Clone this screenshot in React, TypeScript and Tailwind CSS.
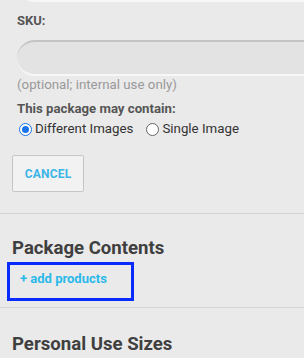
import React from "react";

export default function App() {
  return (
    <div className="w-[304px] h-[358px] overflow-hidden bg-[#eaeaea] font-['Roboto',sans-serif] text-[#555]">
      <div className="pl-[17px]">
        <div className="-mt-[34px] h-[36px] rounded-l-[18px] bg-[#e3e3e3] border-b-2 border-[#f7f7f7]" />
        <div className="mt-[11px] text-[13px] font-bold leading-[15px]">SKU:</div>
        <div className="mt-[12px] h-[36px] rounded-l-[18px] bg-[#e3e3e3] border-t-2 border-[#c4c4c4] border-b-2 border-b-[#f7f7f7]" />
        <div className="mt-[1px] text-[13.3px] leading-[16px] text-[#999]">(optional; internal use only)</div>
        <div className="mt-[8px] text-[13.2px] font-bold leading-[15px]">This package may contain:</div>
        <div className="mt-[5px] flex items-center text-[13.3px] leading-[16px] text-[#333]">
          <span className="w-[13px] h-[13px] rounded-full border-[1.5px] border-[#1a73e8] bg-white flex items-center justify-center ml-[2px]">
            <span className="w-[7px] h-[7px] rounded-full bg-[#1a73e8]" />
          </span>
          <span className="ml-[3px]">Different Images</span>
          <span className="ml-[13px] w-[13px] h-[13px] rounded-full border border-[#666] bg-white" />
          <span className="ml-[3px]">Single Image</span>
        </div>
      </div>
      <div className="pl-[12px] mt-[18px]">
        <button className="w-[72px] h-[37px] bg-[#f2f2f2] border border-[#c6c6c6] rounded-[2px] text-[12px] font-bold text-[#3db5e6] tracking-[0.2px]">
          CANCEL
        </button>
      </div>
      <div className="mt-[21px] border-t border-[#d6d6d6]" />
      <div className="pl-[12px] pt-[23px] text-[18.6px] font-bold leading-[22px] text-[#3f3f3f]">Package Contents</div>
      <div className="ml-[7px] mt-[3px] w-[127px] h-[39px] border-[3px] border-[#0a2bff] flex items-center pl-[10px]">
        <span className="text-[13px] font-bold text-[#2bb9ea] -mt-[6px]">+ add products</span>
      </div>
      <div className="mt-[6px] border-t border-[#d6d6d6]" />
      <div className="pl-[12px] pt-[25px] text-[18.6px] font-bold leading-[22px] text-[#3f3f3f]">Personal Use Sizes</div>
    </div>
  );
}
